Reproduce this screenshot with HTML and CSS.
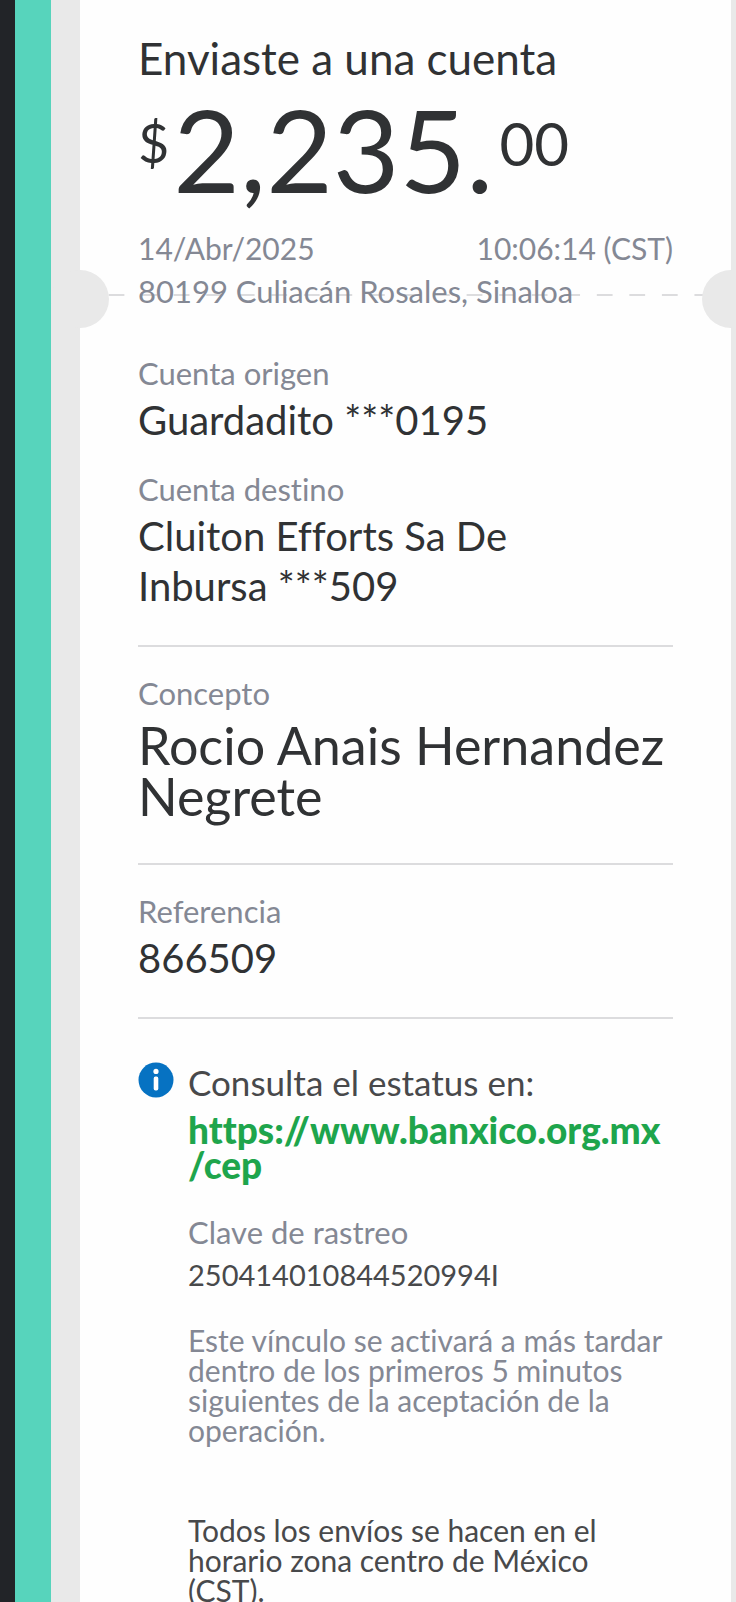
FILE: index.html
```html
<!DOCTYPE html>
<html lang="es">
  <head>
    <meta charset="UTF-8" />
    <meta name="viewport" content="width=device-width, initial-scale=1.0" />
    <title>Comprobante de envío</title>
    <link rel="stylesheet" href="styles.css">
  </head>
  <body>
    <div class="screen">
      <main class="ticket">
        <header class="summary">
          <h1 class="title">Enviaste a una cuenta</h1>
          <p class="amount">
            <span class="currency">$</span><span class="units">2,235.</span><span class="cents">00</span>
          </p>
          <div class="date">
            <span>14/Abr/2025</span>
            <span>10:06:14 (CST)</span>
          </div>
          <div class="place">
            <div class="cut"></div>
            <span class="place-name">80199 Culiacán Rosales, Sinaloa</span>
          </div>
        </header>

        <section class="accounts">
          <div class="field">
            <p class="label">Cuenta origen</p>
            <p class="value">Guardadito ***0195</p>
          </div>
          <div class="field">
            <p class="label">Cuenta destino</p>
            <p class="value">Cluiton Efforts Sa De<br>Inbursa ***509</p>
          </div>
        </section>

        <section class="block">
          <p class="label">Concepto</p>
          <p class="concept">Rocio Anais Hernandez Negrete</p>
        </section>

        <section class="block">
          <p class="label">Referencia</p>
          <p class="value">866509</p>
        </section>

        <section class="block status">
          <svg class="info-icon" viewBox="0 0 36 36" aria-hidden="true">
            <circle cx="18" cy="18" r="17.5" fill="#0672c2" />
            <circle cx="18" cy="9.4" r="2.6" fill="#fff" />
            <rect x="15.7" y="14.6" width="4.6" height="14" rx="1.8" fill="#fff" />
          </svg>
          <div class="status-text">
            <p class="status-title">Consulta el estatus en:</p>
            <a class="link" href="https://www.banxico.org.mx/cep">https://www.banxico.org.mx<wbr>/cep</a>
            <p class="label">Clave de rastreo</p>
            <p class="key">250414010844520994I</p>
            <p class="note">Este vínculo se activará a más tardar dentro de los primeros 5 minutos siguientes de la aceptación de la operación.</p>
            <p class="note dark">Todos los envíos se hacen en el horario zona centro de México<br>(CST).</p>
          </div>
        </section>
      </main>
    </div>
  </body>
</html>
```

FILE: styles.css
```css
* {
  box-sizing: border-box;
}
body {
  margin: 0;
  font-family: Lato, "Open Sans", sans-serif;
  font-variant-ligatures: none;
  color: #303234;
  background-color: #e9e9e9;
}
h1,
p {
  margin: 0;
  font-weight: 400;
}
.screen {
  min-height: 100vh;
  border-left: 15px solid #222428;
  overflow: hidden;
}
.ticket {
  min-height: 100vh;
  border-left: 36px solid #57d4bc;
  padding: 0 5px 0 29px;
}
.ticket > * {
  background-color: #fefefe;
  padding-left: 58px;
  padding-right: 58px;
}
.summary {
  padding-top: 32px;
}
.title {
  font-size: 44px;
  line-height: 52px;
}
.amount {
  display: flex;
  align-items: flex-start;
  height: 139px;
}
.currency {
  font-size: 54px;
  line-height: 118px;
  margin-right: 4px;
}
.units {
  font-size: 115px;
  line-height: 128px;
}
.cents {
  font-size: 60px;
  line-height: 118px;
  margin-left: 6px;
}
.date {
  display: flex;
  justify-content: space-between;
  font-size: 30px;
  line-height: 50px;
  color: #848894;
}
.place {
  position: relative;
  font-size: 31px;
  line-height: 36px;
  color: #848894;
}
.place-name {
  position: relative;
}
/* perforated line with the two round notches */
.cut {
  position: absolute;
  left: -58px;
  right: -58px;
  top: 21px;
  height: 2px;
  background-image: linear-gradient(90deg, #dcdcde 12px, transparent 12px, transparent 29px, #dcdcde 29px);
  background-size: 32px 2px;
  background-repeat: round no-repeat;
}
.cut::before,
.cut::after {
  content: "";
  position: absolute;
  top: -24px;
  width: 58px;
  height: 58px;
  border-radius: 50%;
  background-color: #e9e9e9;
}
.cut::before {
  left: -29px;
}
.cut::after {
  right: -29px;
}
.accounts {
  padding-top: 42px;
  padding-bottom: 34px;
}
.field + .field {
  margin-top: 22px;
}
.label {
  font-size: 31px;
  line-height: 44px;
  color: #848894;
}
.value {
  font-size: 40px;
  line-height: 50px;
}
.block {
  padding-bottom: 34px;
}
.block::before {
  content: "";
  display: block;
  height: 2px;
  margin-bottom: 24px;
  background-color: #dcdcde;
}
.concept {
  margin: 5px 0 7px;
  font-size: 52px;
  line-height: 51px;
}
.status {
  display: flex;
  flex-wrap: wrap;
  column-gap: 14px;
  padding-bottom: 0;
}
.status::before {
  width: 100%;
  margin-bottom: 43px;
}
.info-icon {
  width: 36px;
  height: 36px;
}
.status-text {
  flex: 1;
}
.status-title {
  font-size: 35px;
  line-height: 40px;
  color: #48494b;
}
.link {
  display: block;
  margin: 10px 0 28px;
  font-size: 37px;
  line-height: 35px;
  font-weight: 900;
  color: #1ea54c;
  text-decoration: none;
}
.key {
  font-size: 29px;
  line-height: 42px;
  color: #48494b;
}
.note {
  margin-top: 29px;
  font-size: 30px;
  line-height: 30px;
  color: #848894;
}
.note.dark {
  margin-top: 70px;
  color: #48494b;
}
```
